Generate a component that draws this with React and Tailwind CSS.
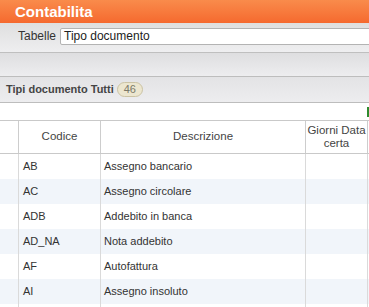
import React from "react";

const rows = [
  { code: "AB", desc: "Assegno bancario" },
  { code: "AC", desc: "Assegno circolare" },
  { code: "ADB", desc: "Addebito in banca" },
  { code: "AD_NA", desc: "Nota addebito" },
  { code: "AF", desc: "Autofattura" },
  { code: "AI", desc: "Assegno insoluto" },
  { code: "", desc: "" },
];

const cols = "grid grid-cols-[19px_82px_205px_62px_1fr]";

const App = () => {
  return (
    <div className="w-[369px] h-[307px] overflow-hidden bg-white font-['Liberation_Sans',Arial,sans-serif] text-[#333]">
      {/* Title bar */}
      <div className="h-[23px] bg-gradient-to-b from-[#f98b4b] to-[#f5692e] pl-[15px] text-white text-[15px] font-bold leading-[23px]">
        Contabilita
      </div>

      {/* Table selector */}
      <div className="h-[30px] flex items-start pt-[5px] bg-gradient-to-b from-[#dfdfdf] to-[#eeeef0] border-b border-[#bfbfbf]">
        <span className="ml-[18px] mr-[4px] text-[12px] leading-[17px] text-[#333]">Tabelle</span>
        <div className="flex-1 -mr-[4px] h-[17px] bg-white border border-[#b3b3b3] rounded-[2px] pl-[3px] text-[12px] leading-[15px] text-[#222]">
          Tipo documento
        </div>
      </div>

      {/* Empty toolbar */}
      <div className="h-[24px] bg-gradient-to-b from-[#dedee0] to-[#ededef] border-b border-[#bdbdbd]" />

      {/* List title */}
      <div className="h-[26px] flex items-center pl-[6px] bg-gradient-to-b from-[#e3e3e5] to-[#ededef] border-b border-[#bdbdbd]">
        <span className="text-[11px] font-bold text-[#444]">Tipi documento Tutti</span>
        <span className="ml-[3px] h-[15px] px-[6px] rounded-full bg-[#ece6cf] border border-[#cbc3a4] text-[11px] leading-[13px] text-[#7a7868]">
          46
        </span>
      </div>

      {/* Filter row */}
      <div className="h-[18px] flex justify-end items-start pt-[4px] border-b border-[#c9c9c9]">
        <div className="w-[2px] h-[10px] bg-[#2e8b2e]" />
      </div>

      {/* Header */}
      <div className={`${cols} h-[33px] border-b border-[#c9c9c9] text-[11.5px] text-[#444]`}>
        <div className="border-r border-[#cdcdcd]" />
        <div className="border-r border-[#cdcdcd] flex items-center justify-center">Codice</div>
        <div className="border-r border-[#cdcdcd] flex items-center justify-center">Descrizione</div>
        <div className="border-r border-[#cdcdcd] flex items-center justify-center text-center leading-[13px] whitespace-nowrap">
          Giorni Data
          <br />
          certa
        </div>
        <div />
      </div>

      {/* Rows */}
      {rows.map((r, i) => (
        <div
          key={i}
          className={`${cols} h-[25px] text-[11px] ${i % 2 ? "bg-[#f1f5fa]" : "bg-white"}`}
        >
          <div className="border-r border-[#dadada]" />
          <div className="border-r border-[#dadada] flex items-center pl-[4px]">{r.code}</div>
          <div className="border-r border-[#dadada] flex items-center pl-[3px]">{r.desc}</div>
          <div className="border-r border-[#dadada]" />
          <div />
        </div>
      ))}
    </div>
  );
};

export default App;
